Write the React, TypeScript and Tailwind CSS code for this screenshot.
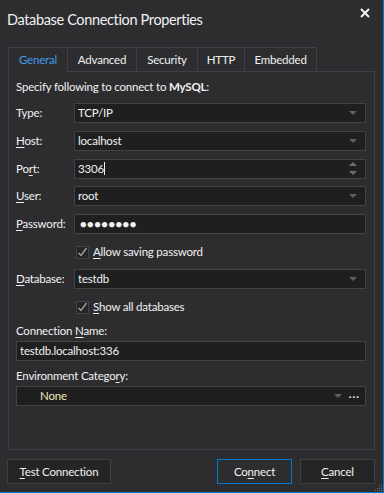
import React from "react";

const U: React.FC<{ children: React.ReactNode }> = ({ children }) => (
  <span className="underline underline-offset-2 decoration-1">{children}</span>
);

const Arrow: React.FC = () => (
  <svg width="8" height="5" viewBox="0 0 8 5" className="shrink-0">
    <path d="M0 0 L8 0 L4 4 Z" fill="#5f5f63" />
  </svg>
);

const Spinner: React.FC = () => (
  <div className="flex flex-col items-center gap-[4px] shrink-0">
    <svg width="8" height="5" viewBox="0 0 8 5">
      <path d="M0 4 L8 4 L4 0 Z" fill="#6d6d70" />
    </svg>
    <svg width="8" height="5" viewBox="0 0 8 5">
      <path d="M0 0 L8 0 L4 4 Z" fill="#6d6d70" />
    </svg>
  </div>
);

interface RowProps {
  label: React.ReactNode;
  children: React.ReactNode;
  right?: React.ReactNode;
  className?: string;
}

const Row: React.FC<RowProps> = ({ label, children, right, className }) => (
  <div className={"flex items-center h-[20px] " + (className ?? "")}>
    <div className="w-[58px] shrink-0 text-[#f1f1f1]">{label}</div>
    <div className="flex-1 h-full flex items-center border border-[#434346] bg-[#1f1f20] pl-[3px] pr-[8px]">
      <div className="flex-1 text-[#f1f1f1] leading-none">{children}</div>
      {right}
    </div>
  </div>
);

const Check: React.FC<{ children: React.ReactNode; className?: string }> = ({
  children,
  className,
}) => (
  <div className={"flex items-center gap-[4px] pl-[60px] h-[18px] " + (className ?? "")}>
    <div className="w-[13px] h-[13px] border border-[#434346] bg-[#252526] flex items-center justify-center">
      <svg width="11" height="11" viewBox="0 0 11 11">
        <path d="M1.5 6 L4 8.5 L9.5 1" stroke="#a0a0a0" strokeWidth="1.4" fill="none" />
      </svg>
    </div>
    <span className="text-[#f1f1f1]">{children}</span>
  </div>
);

const tabs = ["General", "Advanced", "Security", "HTTP", "Embedded"];
const tabWidths = ["w-[60px]", "w-[69px]", "w-[61px]", "w-[47px]", "w-[72px]"];

export default function App() {
  return (
    <div className="relative w-[384px] h-[493px] bg-[#2d2d30] border-r border-b border-[#007acc] flex flex-col font-['Lato','Open_Sans',sans-serif] text-[11.5px] tracking-[-0.2px] text-[#f1f1f1] overflow-hidden">
      {/* title bar */}
      <div className="flex items-start justify-between h-[47px] pl-[7px] pr-[13px]">
        <div className="text-[14.5px] tracking-[-0.35px] mt-[9px] text-[#f1f1f1]">Database Connection Properties</div>
        <svg width="10" height="10" viewBox="0 0 10 10" className="mt-[8px]">
          <path d="M1 1 L9 9 M9 1 L1 9" stroke="#f1f1f1" strokeWidth="2" />
        </svg>
      </div>

      {/* tabs */}
      <div className="flex pl-[8px] h-[25px]">
        {tabs.map((t, i) => (
          <div
            key={t}
            className={
              "h-full flex items-center justify-center border-t border-r border-[#3f3f46] " +
              tabWidths[i] +
              (i === 0 ? " border-l text-[#3f9bea]" : " border-b text-[#f1f1f1]")
            }
          >
            {t}
          </div>
        ))}
        <div className="flex-1 mr-[8px] border-b border-[#3f3f46]" />
      </div>

      {/* panel */}
      <div className="mx-[8px] h-[378px] border border-t-0 border-[#3f3f46] pl-[7px] pr-[8px] pt-[7px]">
        <div className="h-[16px] leading-[16px]">
          Specify following to connect to <b>MySQL</b>:
        </div>
        <Row label="Type:" right={<Arrow />} className="mt-[8px]">
          TCP/IP
        </Row>
        <Row
          label={
            <>
              <U>H</U>ost:
            </>
          }
          right={<Arrow />}
          className="mt-[8px]"
        >
          localhost
        </Row>
        <Row
          label={
            <>
              Po<U>r</U>t:
            </>
          }
          right={<Spinner />}
          className="mt-[8px]"
        >
          3306<span className="inline-block w-px h-[13px] bg-[#f1f1f1] align-middle -mt-[2px]" />
        </Row>
        <Row
          label={
            <>
              <U>U</U>ser:
            </>
          }
          right={<Arrow />}
          className="mt-[7px]"
        >
          root
        </Row>
        <Row
          label={
            <>
              <U>P</U>assword:
            </>
          }
          className="mt-[8px]"
        >
          <span className="text-[11px] tracking-[0.5px] pl-[2px]">●●●●●●●●</span>
        </Row>
        <Check className="mt-[9px]">
          <U>A</U>llow saving password
        </Check>
        <Row
          label={
            <>
              <U>D</U>atabase:
            </>
          }
          right={<Arrow />}
          className="mt-[8px]"
        >
          testdb
        </Row>
        <Check className="mt-[9px]">
          <U>S</U>how all databases
        </Check>
        <div className="mt-[7px] h-[16px] leading-[16px]">
          Connection <U>N</U>ame:
        </div>
        <div className="mt-[2px] h-[20px] border border-[#434346] bg-[#1f1f20] flex items-center pl-[3px]">
          testdb.localhost:336
        </div>
        <div className="mt-[7px] h-[16px] leading-[16px]">
          Environment Catego<U>r</U>y:
        </div>
        <div className="mt-[2px] h-[20px] border border-[#434346] bg-[#1f1f20] flex items-center pl-[23px] pr-[5px] gap-[7px]">
          <span className="flex-1 text-[#f0e6b2]">None</span>
          <Arrow />
          <span className="font-bold tracking-[1px] leading-none -mt-[5px]">...</span>
        </div>
      </div>

      {/* buttons */}
      <div className="flex items-center mt-[9px] pl-[7px] pr-[8px]">
        <div className="w-[104px] h-[25px] border border-[#3f3f46] bg-[#252526] flex items-center justify-center">
          <span>
            <U>T</U>est Connection
          </span>
        </div>
        <div className="flex-1" />
        <div className="w-[75px] h-[25px] border border-[#007acc] bg-[#2d2d30] flex items-center justify-center">
          <span>
            Co<U>n</U>nect
          </span>
        </div>
        <div className="w-[75px] h-[25px] ml-[8px] border border-[#3f3f46] bg-[#252526] flex items-center justify-center">
          <span>
            <U>C</U>ancel
          </span>
        </div>
      </div>

      {/* resize grip */}
      <svg width="8" height="8" viewBox="0 0 8 8" className="absolute right-0 bottom-0">
        <rect x="6" y="0" width="1" height="1" fill="#6d6d70" />
        <rect x="4" y="2" width="1" height="1" fill="#6d6d70" />
        <rect x="6" y="2" width="1" height="1" fill="#6d6d70" />
        <rect x="2" y="4" width="1" height="1" fill="#6d6d70" />
        <rect x="4" y="4" width="1" height="1" fill="#6d6d70" />
        <rect x="6" y="4" width="1" height="1" fill="#6d6d70" />
        <rect x="0" y="6" width="1" height="1" fill="#6d6d70" />
        <rect x="2" y="6" width="1" height="1" fill="#6d6d70" />
        <rect x="4" y="6" width="1" height="1" fill="#6d6d70" />
        <rect x="6" y="6" width="1" height="1" fill="#6d6d70" />
      </svg>
    </div>
  );
}
